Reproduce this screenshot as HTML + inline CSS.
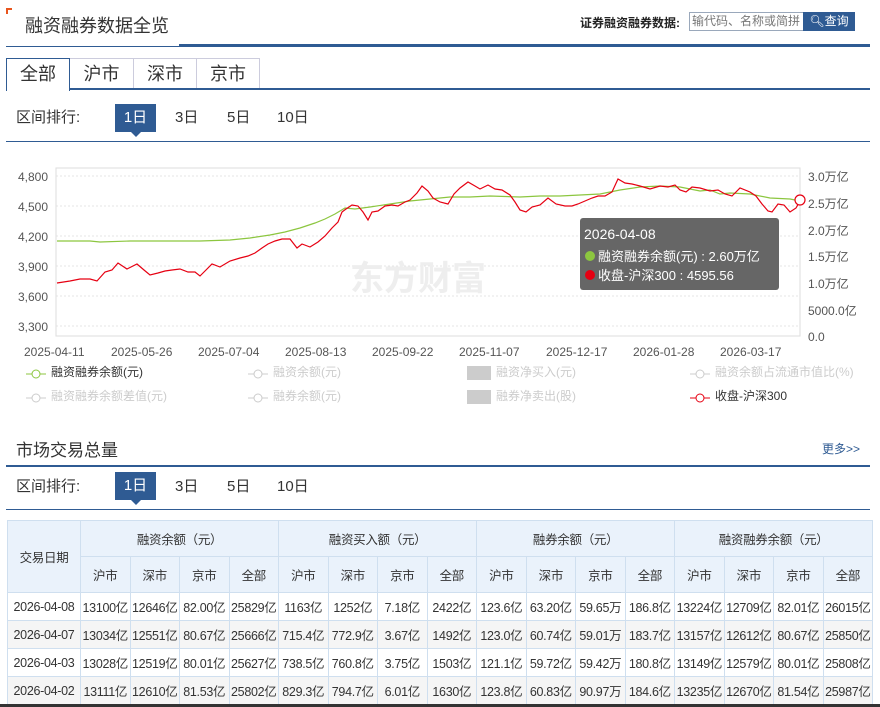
<!DOCTYPE html>
<html><head><meta charset="utf-8">
<style>
*{margin:0;padding:0;box-sizing:border-box}
body{width:880px;height:707px;overflow:hidden;background:#fff;font-family:"Liberation Sans","Noto Sans CJK SC",sans-serif;color:#333;position:relative}
.a{position:absolute}
.tab{position:absolute;top:58px;height:31px;border:1px solid #ccd;border-bottom:none;font-size:18px;line-height:30px;text-align:center;background:#fff}
.rng{font-size:15px;line-height:22px}
.btn1{background:#2f5b93;color:#fff;text-align:center}
table{border-collapse:collapse;position:absolute;left:7px;top:520px;width:865px;font-size:12.5px;table-layout:fixed}
td,th{border:1px solid #cfdfef;text-align:center;font-weight:normal;white-space:nowrap;overflow:hidden;letter-spacing:-0.3px}
th{background:#eaf2fb;height:36px;color:#333}
td{height:28px}
tr.g td{background:#f5f5f5}
.lg{position:absolute;font-size:12px;color:#ccc}
.lg i{display:inline-block;width:20px;height:10px;vertical-align:middle;margin-right:5px;position:relative}
</style></head><body>
<div class="a" style="left:6px;top:8px;width:6px;height:6px;background:#e8551d"></div>
<div class="a" style="left:8px;top:10px;width:4px;height:4px;background:#fff"></div>
<div class="a" style="left:25px;top:12px;font-size:18px">融资融券数据全览</div>
<div class="a" style="left:580px;top:14px;font-size:12px;font-weight:bold;color:#222">证券融资融券数据:</div>
<div class="a" style="left:689px;top:12px;width:115px;height:19px;border:1px solid #9aa8bb;font-size:12px;color:#777;line-height:17px;padding-left:2px;overflow:hidden;white-space:nowrap">输代码、名称或简拼</div>
<div class="a btn1" style="left:803px;top:12px;width:52px;height:19px;font-size:12px;line-height:19px">&#x1F50D;&#xFE0E;查询</div>
<div class="a" style="left:6px;top:46px;width:174px;height:1px;background:#2f5b93"></div>
<div class="a" style="left:179px;top:44px;width:691px;height:3px;background:#2f5b93"></div>

<div class="tab" style="left:6px;width:64px;height:33px;border-color:#2f5b93;z-index:2">全部</div>
<div class="tab" style="left:69px;width:65px">沪市</div>
<div class="tab" style="left:133px;width:64px">深市</div>
<div class="tab" style="left:196px;width:64px">京市</div>
<div class="a" style="left:6px;top:88px;width:864px;height:2px;background:#2f5b93"></div>

<div class="a rng" style="left:16px;top:107px">区间排行:</div>
<div class="a rng btn1" style="left:115px;top:104px;width:41px;height:28px;line-height:28px">1日</div>
<div class="a" style="left:131px;top:132px;border:5px solid transparent;border-top-color:#2f5b93"></div>
<div class="a rng" style="left:175px;top:107px">3日</div>
<div class="a rng" style="left:227px;top:107px">5日</div>
<div class="a rng" style="left:277px;top:107px">10日</div>
<div class="a" style="left:6px;top:141px;width:864px;height:1px;background:#2f5b93"></div>

<svg class="a" style="left:0;top:160px" width="880" height="200" viewBox="0 160 880 200">
<g stroke="#e6e6e6" stroke-dasharray="2,2">
<line x1="56" y1="176" x2="800" y2="176"/><line x1="56" y1="206" x2="800" y2="206"/><line x1="56" y1="236" x2="800" y2="236"/><line x1="56" y1="266" x2="800" y2="266"/><line x1="56" y1="296" x2="800" y2="296"/><line x1="56" y1="326" x2="800" y2="326"/></g>
<rect x="56" y="168" width="744" height="168" fill="none" stroke="#ddd"/>
<g font-size="12" fill="#555" font-family="Liberation Sans, Noto Sans CJK SC, sans-serif">
<text x="48" y="181" text-anchor="end">4,800</text><text x="48" y="211" text-anchor="end">4,500</text><text x="48" y="241" text-anchor="end">4,200</text><text x="48" y="271" text-anchor="end">3,900</text><text x="48" y="301" text-anchor="end">3,600</text><text x="48" y="331" text-anchor="end">3,300</text>
<text x="808" y="181">3.0万亿</text><text x="808" y="208">2.5万亿</text><text x="808" y="235">2.0万亿</text><text x="808" y="261">1.5万亿</text><text x="808" y="288">1.0万亿</text><text x="808" y="315">5000.0亿</text><text x="808" y="341">0.0</text>
<text x="24" y="356">2025-04-11</text><text x="111" y="356">2025-05-26</text><text x="198" y="356">2025-07-04</text><text x="285" y="356">2025-08-13</text><text x="372" y="356">2025-09-22</text><text x="459" y="356">2025-11-07</text><text x="546" y="356">2025-12-17</text><text x="633" y="356">2026-01-28</text><text x="720" y="356">2026-03-17</text>
</g>
<text x="350" y="290" font-size="34" font-weight="bold" fill="#eee" font-family="Noto Sans CJK SC, sans-serif">东方财富</text>
<polyline fill="none" stroke="#8cc63f" stroke-width="1.2" points="57,241 90,241 100,242 130,241 200,241 230,240 250,238 270,235 285,232 300,228 315,223 325,219 335,214 345,208 355,209 370,207 390,204 410,201 430,199 450,197 470,197 490,196 520,197 540,196 560,196 580,195 600,194 620,190 640,187 660,186 680,187 700,191 710,190 720,194 730,193 750,194 770,198 790,199 800,201"/>
<polyline fill="none" stroke="#e60012" stroke-width="1.2" points="57,283 70,281 80,279 90,279 97,281 105,272 112,270 118,263 127,269 137,264 144,270 150,275 158,273 165,271 172,270 180,269 188,272 195,272 200,276 206,270 212,264 220,267 230,261 240,258 248,256 255,253 262,248 268,244 275,241 282,239 290,239 297,248 302,244 310,247 318,242 325,236 332,228 338,222 342,212 346,209 352,205 358,206 363,212 368,220 372,212 378,211 385,206 392,205 398,206 405,202 410,200 417,193 422,186 428,191 433,198 440,202 448,204 454,194 460,188 468,182 475,186 480,189 488,185 495,189 502,190 510,195 515,202 520,210 526,212 532,207 540,205 548,198 556,204 565,206 572,206 578,204 585,201 592,198 598,196 605,196 612,192 618,179 625,183 632,184 640,186 650,189 660,186 668,187 675,185 680,190 686,192 692,187 700,188 710,191 718,190 725,194 732,196 740,188 750,192 756,196 762,204 768,211 772,212 778,204 784,205 790,212 796,208 800,201"/>
<circle cx="800" cy="200" r="5" fill="#fff" stroke="#e60012" stroke-width="1.2"/>
<rect x="580" y="218" width="199" height="72" rx="3" fill="#666"/>
<g font-family="Liberation Sans, Noto Sans CJK SC, sans-serif" fill="#fff">
<text x="584" y="239" font-size="14">2026-04-08</text>
<circle cx="590" cy="256" r="5" fill="#8cc63f"/><text x="598" y="261" font-size="13">融资融券余额(元) : 2.60万亿</text>
<circle cx="590" cy="275" r="5" fill="#e60012"/><text x="598" y="280" font-size="13">收盘-沪深300 : 4595.56</text>
</g>
</svg>

<div class="lg" style="left:26px;top:363px;color:#333"><i><svg width="20" height="10"><line x1="0" y1="5" x2="20" y2="5" stroke="#8cc63f"/><circle cx="10" cy="5" r="4" fill="#fff" stroke="#8cc63f"/></svg></i>融资融券余额(元)</div>
<div class="lg" style="left:248px;top:363px"><i><svg width="20" height="10"><line x1="0" y1="5" x2="20" y2="5" stroke="#ccc"/><circle cx="10" cy="5" r="4" fill="#fff" stroke="#ccc"/></svg></i>融资余额(元)</div>
<div class="lg" style="left:467px;top:363px"><i style="background:#ccc;width:24px;height:14px"></i>融资净买入(元)</div>
<div class="lg" style="left:690px;top:363px"><i><svg width="20" height="10"><line x1="0" y1="5" x2="20" y2="5" stroke="#ccc"/><circle cx="10" cy="5" r="4" fill="#fff" stroke="#ccc"/></svg></i>融资余额占流通市值比(%)</div>
<div class="lg" style="left:26px;top:387px"><i><svg width="20" height="10"><line x1="0" y1="5" x2="20" y2="5" stroke="#ccc"/><circle cx="10" cy="5" r="4" fill="#fff" stroke="#ccc"/></svg></i>融资融券余额差值(元)</div>
<div class="lg" style="left:248px;top:387px"><i><svg width="20" height="10"><line x1="0" y1="5" x2="20" y2="5" stroke="#ccc"/><circle cx="10" cy="5" r="4" fill="#fff" stroke="#ccc"/></svg></i>融券余额(元)</div>
<div class="lg" style="left:467px;top:387px"><i style="background:#ccc;width:24px;height:14px"></i>融券净卖出(股)</div>
<div class="lg" style="left:690px;top:387px;color:#333"><i><svg width="20" height="10"><line x1="0" y1="5" x2="20" y2="5" stroke="#e60012"/><circle cx="10" cy="5" r="4" fill="#fff" stroke="#e60012"/></svg></i>收盘-沪深300</div>

<div class="a" style="left:16px;top:436px;font-size:17px">市场交易总量</div>
<div class="a" style="left:822px;top:440px;font-size:12px;color:#2f5b93">更多&gt;&gt;</div>
<div class="a" style="left:6px;top:465px;width:864px;height:2px;background:#2f5b93"></div>
<div class="a rng" style="left:16px;top:476px">区间排行:</div>
<div class="a rng btn1" style="left:115px;top:472px;width:41px;height:28px;line-height:28px">1日</div>
<div class="a" style="left:131px;top:500px;border:5px solid transparent;border-top-color:#2f5b93"></div>
<div class="a rng" style="left:175px;top:476px">3日</div>
<div class="a rng" style="left:227px;top:476px">5日</div>
<div class="a rng" style="left:277px;top:476px">10日</div>
<div class="a" style="left:6px;top:509px;width:864px;height:1px;background:#2f5b93"></div>

<table>
<colgroup><col style="width:73px"><col span="16" style="width:49.5px"></colgroup>
<tr><th rowspan="2">交易日期</th><th colspan="4">融资余额（元）</th><th colspan="4">融资买入额（元）</th><th colspan="4">融券余额（元）</th><th colspan="4">融资融券余额（元）</th></tr>
<tr><th>沪市</th><th>深市</th><th>京市</th><th>全部</th><th>沪市</th><th>深市</th><th>京市</th><th>全部</th><th>沪市</th><th>深市</th><th>京市</th><th>全部</th><th>沪市</th><th>深市</th><th>京市</th><th>全部</th></tr>
<tr><td>2026-04-08</td><td>13100亿</td><td>12646亿</td><td>82.00亿</td><td>25829亿</td><td>1163亿</td><td>1252亿</td><td>7.18亿</td><td>2422亿</td><td>123.6亿</td><td>63.20亿</td><td>59.65万</td><td>186.8亿</td><td>13224亿</td><td>12709亿</td><td>82.01亿</td><td>26015亿</td></tr>
<tr class="g"><td>2026-04-07</td><td>13034亿</td><td>12551亿</td><td>80.67亿</td><td>25666亿</td><td>715.4亿</td><td>772.9亿</td><td>3.67亿</td><td>1492亿</td><td>123.0亿</td><td>60.74亿</td><td>59.01万</td><td>183.7亿</td><td>13157亿</td><td>12612亿</td><td>80.67亿</td><td>25850亿</td></tr>
<tr><td>2026-04-03</td><td>13028亿</td><td>12519亿</td><td>80.01亿</td><td>25627亿</td><td>738.5亿</td><td>760.8亿</td><td>3.75亿</td><td>1503亿</td><td>121.1亿</td><td>59.72亿</td><td>59.42万</td><td>180.8亿</td><td>13149亿</td><td>12579亿</td><td>80.01亿</td><td>25808亿</td></tr>
<tr class="g"><td>2026-04-02</td><td>13111亿</td><td>12610亿</td><td>81.53亿</td><td>25802亿</td><td>829.3亿</td><td>794.7亿</td><td>6.01亿</td><td>1630亿</td><td>123.8亿</td><td>60.83亿</td><td>90.97万</td><td>184.6亿</td><td>13235亿</td><td>12670亿</td><td>81.54亿</td><td>25987亿</td></tr>
</table>
<div class="a" style="left:0;top:704px;width:880px;height:3px;background:#333"></div>
</body></html>
